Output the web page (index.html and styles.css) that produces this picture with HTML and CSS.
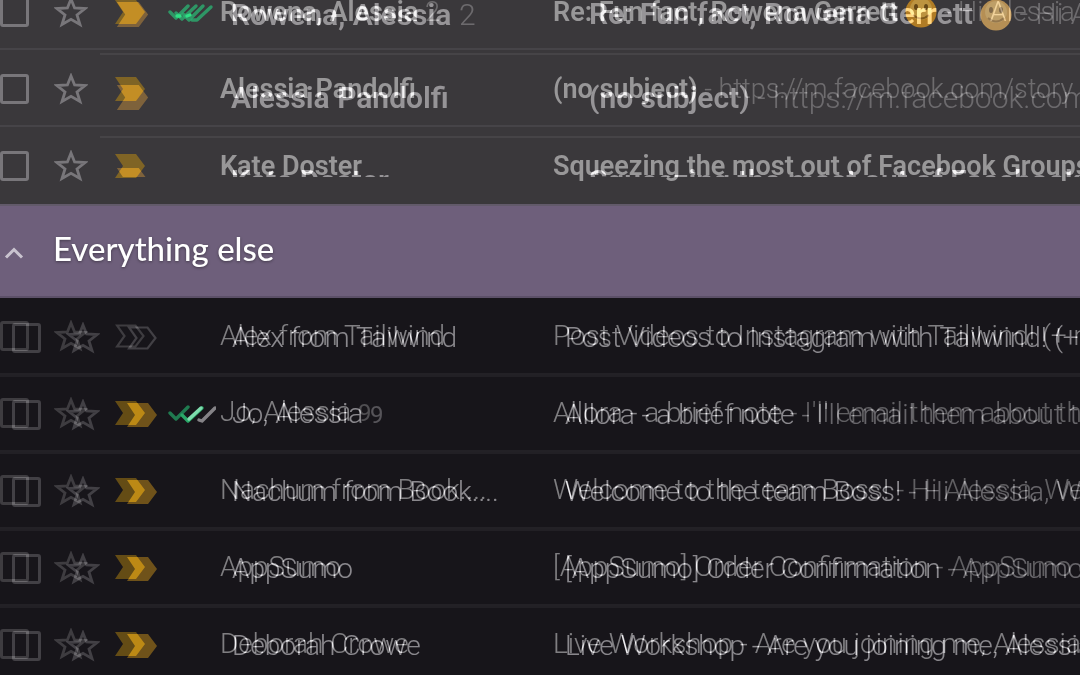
FILE: index.html
```
<!DOCTYPE html>
<html lang="en">
<head>
  <meta charset="UTF-8">
  <meta name="viewport" content="width=device-width, initial-scale=1.0">
  <title>Inbox</title>
  <link rel="stylesheet" href="styles.css">
</head>
<body>

  <svg class="sprite" aria-hidden="true">
    <symbol id="icon-star" viewBox="0 0 34 32">
      <path d="M17 3 L20.6 12 L31 12.6 L23 19 L26 28.5 L17 23.4 L8 28.5 L11 19 L3 12.6 L13.4 12 Z" fill="none" stroke="currentColor" stroke-width="2.8"/>
    </symbol>
    <symbol id="icon-marker" viewBox="0 0 30 24">
      <path d="M0 0 H21 L30 12 L21 24 H0 L8 12 Z" fill="currentColor"/>
    </symbol>
    <symbol id="icon-marker-empty" viewBox="0 0 30 24">
      <path d="M2 1.5 H20.5 L28.5 12 L20.5 22.5 H2 L9.5 12 Z" fill="none" stroke="currentColor" stroke-width="2.2"/>
    </symbol>
    <symbol id="icon-checks" viewBox="0 0 48 22">
      <g fill="none" stroke="#2cae70" stroke-width="3.4" stroke-linecap="round" stroke-linejoin="round">
        <path d="M2 11 L8 17 L20 5" opacity=".8"/>
        <path d="M8 12 L14 18 L28 5" opacity=".8"/>
        <path d="M15 13 L21 19 L35 5" opacity=".8"/>
        <path d="M24 19 L29 19 L43 6" opacity=".8"/>
        <path d="M9 15 L12 15 M19 15 L22 14" stroke="#2fe084"/>
      </g>
    </symbol>
    <symbol id="icon-checks-partial" viewBox="0 0 48 22">
      <g fill="none" stroke-width="3.4" stroke-linecap="round" stroke-linejoin="round">
        <path d="M2 11 L8 17 L20 5" stroke="#207a50"/>
        <path d="M14 13 L20 19 L34 6" stroke="#29a868"/>
        <path d="M21 17 L33 6" stroke="#7fdcae"/>
        <path d="M31 18 L34 19 L47 6" stroke="#858387"/>
      </g>
    </symbol>
    <symbol id="icon-smile" viewBox="0 0 32 32">
      <circle cx="16" cy="16" r="15.5" fill="#b07c25"/>
      <circle cx="16" cy="13" r="11" fill="#bc9340"/>
      <ellipse cx="11" cy="11" rx="2" ry="3" fill="#654716"/>
      <ellipse cx="21" cy="11" rx="2" ry="3" fill="#654716"/>
      <path d="M8 19 Q16 26 24 19" fill="none" stroke="#805a1b" stroke-width="2"/>
    </symbol>
  </svg>

  <main>
    <section class="group unread" aria-label="Unread">
      <div class="rows"></div>
      <div class="rows trail" aria-hidden="true"></div>
    </section>

    <h2 class="group-header">
      <button type="button">
        <svg class="caret" viewBox="0 0 20 14" aria-hidden="true"><path d="M2 11.5 L10 3.5 L18 11.5"/></svg>
        Everything else
      </button>
    </h2>

    <section class="group read" aria-label="Everything else">
      <div class="rows"></div>
      <div class="rows trail" aria-hidden="true"></div>
    </section>
  </main>

  <script src="script.js"></script>
</body>
</html>
```
FILE: styles.css
```
* {
  box-sizing: border-box;
}

body {
  margin: 0;
  overflow: hidden;
  background-color: #17151a;
  color: #fff;
  font-family: Roboto, "Liberation Sans", sans-serif;
}

.sprite {
  display: none;
}

.group {
  position: relative;
}

.row {
  display: grid;
  grid-template-columns: 54px 61px 53px 52px 333px 1fr;
  align-items: center;
  height: 77px;
  font-size: 28px;
  line-height: 32px;
  white-space: nowrap;
}

.row svg {
  display: block;
}

.check {
  appearance: none;
  width: 29px;
  height: 30px;
  margin: 0;
  border: 3px solid currentColor;
  border-radius: 3px;
}

.star {
  padding: 0;
  border: 0;
  background: none;
  color: inherit;
  width: 34px;
  height: 32px;
}

.star svg {
  width: 34px;
  height: 32px;
}

.marker {
  width: 30px;
  height: 24px;
}

.checks {
  width: 48px;
  height: 22px;
}

.sender,
.subject {
  overflow: hidden;
}

.snippet,
.count {
  opacity: 0.55;
}

.row .smile {
  display: inline-block;
  width: 32px;
  height: 32px;
  vertical-align: -7px;
}

/* second, offset copy of the rows; adds its light to the first */
.trail {
  position: absolute;
  overflow: hidden;
  pointer-events: none;
  mix-blend-mode: plus-lighter;
}

/* unread rows, scrolled partly off the top */
.unread {
  margin-top: -27px;
  background-color: #3a383b;
}

.unread .row {
  padding-top: 3px;
  border-bottom: 2px solid #464448;
  font-weight: 600;
  font-size: 27px;
}

.unread .row:last-child {
  border-bottom-color: #3a383b;
}

.unread .check,
.unread .star {
  color: #78767a;
}

.unread .sender,
.unread .subject {
  color: rgba(255, 255, 255, 0.48);
}

.unread .marker {
  color: rgba(195, 144, 16, 0.5);
}

.unread .snippet,
.unread .count {
  font-weight: 300;
}

.unread .trail {
  top: 0;
  left: 100px;
  right: 0;
  height: 204px;
}

.unread .trail .row {
  grid-template-columns: 54px 61px 358px 1fr;
  height: 83px;
  padding-top: 4px;
  padding-left: 16px;
  border-bottom-color: #0c0c0c;
  font-size: 30px;
}

.unread .trail .row:first-child {
  margin-top: -1px;
}

.unread .trail .marker {
  width: 33px;
  height: 25px;
  color: rgba(195, 120, 0, 0.35);
}

.unread .trail .sender,
.unread .trail .subject {
  color: rgba(255, 255, 255, 0.36);
}

.trail .smile {
  opacity: 0.7;
}

.group-header {
  position: relative;
  margin: 0;
  background-color: #6e5f7b;
  border-top: 2px solid #625a6a;
  border-bottom: 2px solid #5c5068;
}

.group-header button {
  display: flex;
  align-items: center;
  gap: 29px;
  width: 100%;
  height: 90px;
  padding: 0 4px 6px;
  border: 0;
  background: none;
  color: #fff;
  font-family: Lato, sans-serif;
  font-size: 33px;
  font-weight: 500;
  text-align: left;
  text-shadow: 0 1px 3px rgba(0, 0, 0, 0.4);
}

.caret {
  width: 20px;
  height: 14px;
  margin-top: 10px;
  fill: none;
  stroke: #c9c3cf;
  stroke-width: 3;
}

.read .row {
  border-bottom: 2px solid #232126;
  font-weight: 300;
}

.read .check,
.read .star,
.read .marker.empty {
  color: rgba(255, 255, 255, 0.17);
}

.read .sender,
.read .subject {
  color: rgba(255, 255, 255, 0.45);
}

.read .marker {
  color: rgba(195, 144, 16, 0.45);
}

.read .snippet {
  opacity: 0.7;
}

.read .count {
  font-weight: 400;
  font-size: 24px;
}

.read .trail {
  top: 2px;
  left: 0;
  right: 0;
}

.read .trail .row {
  padding-left: 12px;
  border-bottom-color: #0b0b0b;
}

.read .trail .marker {
  color: rgba(195, 135, 0, 0.45);
}

.read .trail .marker.empty {
  color: rgba(255, 255, 255, 0.17);
}
```
FILE: script.js
```
const unread = [
  { sender: 'Rowena, Alessia', count: 2, checks: 'icon-checks', subject: 'Re: Fun fact, Rowena Gerrett', smile: true, snippet: 'Hi Alessia' },
  { sender: 'Alessia Pandolfi', subject: '(no subject)', snippet: 'https://m.facebook.com/story' },
  { sender: 'Kate Doster', subject: 'Squeezing the most out of Facebook Groups' }
];

const read = [
  { sender: 'Alex from Tailwind', subject: 'Post Videos to Instagram with Tailwind! (+ more)', empty: true },
  { sender: 'Jo, Alessia', count: 9, checks: 'icon-checks-partial', subject: 'Allora - a brief note', snippet: "I'll email them about this" },
  { sender: 'Nachum from Book....', subject: 'Welcome to the team Boss!', snippet: 'Hi Alessia, Welcome' },
  { sender: 'AppSumo', subject: '[AppSumo] Order Confirmation', snippet: 'AppSumo order' },
  { sender: 'Deborah Crowe', subject: 'Live Workshop - Are you joining me, Alessia?' }
];

function icon(id, cls) {
  return `<svg class="${cls}" aria-hidden="true"><use href="#${id}"/></svg>`;
}

function renderRow(mail, controls, trail) {
  const tab = trail ? 'tabindex="-1"' : '';
  const count = mail.count ? ` <span class="count">${mail.count}</span>` : '';
  const smile = mail.smile ? ' ' + icon('icon-smile', 'smile') : '';
  const snippet = mail.snippet ? `<span class="snippet"> - ${mail.snippet}</span>` : '';
  const tools = controls ? `
    <input class="check" type="checkbox" aria-label="Select ${mail.sender}" ${tab}>
    <button class="star" type="button" aria-label="Star ${mail.sender}" ${tab}>${icon('icon-star', '')}</button>` : '';

  return `<div class="row">${tools}
    ${mail.empty ? icon('icon-marker-empty', 'marker empty') : icon('icon-marker', 'marker')}
    <span>${mail.checks && !trail ? icon(mail.checks, 'checks') : ''}</span>
    <span class="sender">${mail.sender}${count}</span>
    <span class="subject">${mail.subject}${smile}${snippet}</span>
  </div>`;
}

function renderGroup(selector, mails, trailControls) {
  const [main, trail] = document.querySelectorAll(selector + ' .rows');
  main.innerHTML = mails.map(mail => renderRow(mail, true, false)).join('');
  trail.innerHTML = mails.map(mail => renderRow(mail, trailControls, true)).join('');
}

renderGroup('.unread', unread, false);
renderGroup('.read', read, true);
```
